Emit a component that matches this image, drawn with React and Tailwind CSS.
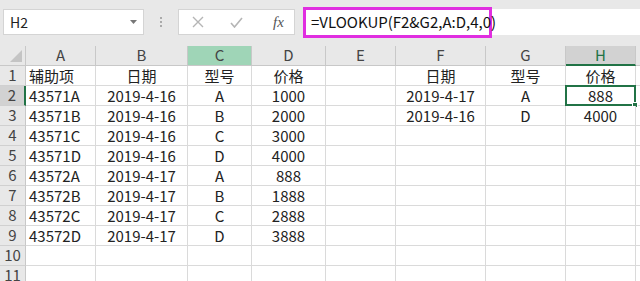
import React from "react";

const COLS = [
  { key: "A", w: "w-[70px]", align: "text-left pl-[3px]" },
  { key: "B", w: "w-[92px]", align: "text-center" },
  { key: "C", w: "w-[64px]", align: "text-center" },
  { key: "D", w: "w-[74px]", align: "text-center" },
  { key: "E", w: "w-[70px]", align: "text-center" },
  { key: "F", w: "w-[90px]", align: "text-center" },
  { key: "G", w: "w-[80px]", align: "text-center" },
  { key: "H", w: "w-[70px]", align: "text-center" },
];

const DATA = [
  ["辅助项", "日期", "型号", "价格", "", "日期", "型号", "价格"],
  ["43571A", "2019-4-16", "A", "1000", "", "2019-4-17", "A", "888"],
  ["43571B", "2019-4-16", "B", "2000", "", "2019-4-16", "D", "4000"],
  ["43571C", "2019-4-16", "C", "3000", "", "", "", ""],
  ["43571D", "2019-4-16", "D", "4000", "", "", "", ""],
  ["43572A", "2019-4-17", "A", "888", "", "", "", ""],
  ["43572B", "2019-4-17", "B", "1888", "", "", "", ""],
  ["43572C", "2019-4-17", "C", "2888", "", "", "", ""],
  ["43572D", "2019-4-17", "D", "3888", "", "", "", ""],
  ["", "", "", "", "", "", "", ""],
  ["", "", "", "", "", "", "", ""],
];

function FormulaBar() {
  return (
    <div className="flex h-[46px] items-start bg-[#e8e8e8] pt-[9px]">
      <div className="ml-[3px] flex h-[26px] w-[141px] items-center justify-between border border-[#d4d4d4] bg-white pl-[6px] pr-[6px]">
        <span className="text-[14px] text-[#222]">H2</span>
        <svg width="7" height="4" viewBox="0 0 7 4">
          <path d="M0 0 L7 0 L3.5 4 Z" fill="#777" />
        </svg>
      </div>
      <div className="flex w-[34px] flex-col items-center gap-[2px] pt-[8px]">
        <span className="h-[2px] w-[2px] bg-[#aaa]" />
        <span className="h-[2px] w-[2px] bg-[#aaa]" />
        <span className="h-[2px] w-[2px] bg-[#aaa]" />
      </div>
      <div className="flex h-[26px] w-[117px] items-center border border-[#d4d4d4] bg-white">
        <svg className="ml-[13px]" width="12" height="12" viewBox="0 0 12 12">
          <path d="M1 1 L11 11 M11 1 L1 11" stroke="#b5b5b5" strokeWidth="1.4" />
        </svg>
        <svg className="ml-[26px]" width="13" height="11" viewBox="0 0 13 11">
          <path d="M1 6 L4.5 10 L12 1" stroke="#b5b5b5" strokeWidth="1.6" fill="none" />
        </svg>
        <span className="ml-[30px] font-['Liberation_Serif',serif] text-[15px] italic text-[#555]">
          fx
        </span>
      </div>
      <div className="ml-[8px] flex h-[26px] flex-1 items-center bg-white">
        <div className="-mt-[0px] flex h-[31px] w-[189px] items-center border-[3px] border-[#e02ee0] pl-[5px] text-[15px] text-[#111]">
          =VLOOKUP(F2&amp;G2,A:D,4,0)
        </div>
      </div>
    </div>
  );
}

function HeaderRow() {
  return (
    <div className="flex h-[20px]">
      <div className="flex w-[26px] items-end justify-end border-b border-r border-[#c8c8c8] bg-[#e8e8e8] pb-[3px] pr-[3px]">
        <svg width="12" height="12" viewBox="0 0 12 12">
          <path d="M12 0 L12 12 L0 12 Z" fill="#c4c4c4" />
        </svg>
      </div>
      {COLS.map((c) => {
        const isC = c.key === "C";
        const isH = c.key === "H";
        return (
          <div
            key={c.key}
            className={`${c.w} flex items-center justify-center border-r text-[15px] text-[#444] ${
              isC
                ? "border-b border-[#c8c8c8] bg-[#9fd5b7]"
                : isH
                ? "border-b-2 border-r-[#c8c8c8] border-b-[#217346] bg-[#d2d2d2] text-[#217346]"
                : "border-b border-[#c8c8c8] bg-[#e8e8e8]"
            }`}
          >
            {c.key}
          </div>
        );
      })}
      <div className="flex-1 border-b border-[#c8c8c8] bg-[#e8e8e8]" />
    </div>
  );
}

function DataRow({ idx, row }) {
  const rowNum = idx + 1;
  const active = rowNum === 2;
  return (
    <div className="flex h-[20px]">
      <div
        className={`flex w-[26px] items-center justify-center border-b border-[#d0d0d0] text-[15px] text-[#444] ${
          active
            ? "border-r-2 border-r-[#217346] bg-[#d2d2d2]"
            : "border-r border-r-[#c8c8c8] bg-[#e8e8e8]"
        }`}
      >
        {rowNum}
      </div>
      {COLS.map((c, i) => {
        const sel = active && c.key === "H";
        return (
          <div
            key={c.key}
            className={`${c.w} relative flex items-center whitespace-nowrap border-b border-r border-[#dadada] bg-white text-[15px] leading-none text-[#222] ${
              c.align === "text-center" ? "justify-center" : "justify-start pl-[3px]"
            }`}
          >
            {row[i]}
            {sel && (
              <div className="absolute -left-[1px] -top-[1px] h-[21px] w-[71px] border-2 border-[#217346]">
                <div className="absolute -bottom-[4px] -right-[4px] h-[6px] w-[6px] border border-white bg-[#217346]" />
              </div>
            )}
          </div>
        );
      })}
      <div className="flex-1 border-b border-[#dadada] bg-white" />
    </div>
  );
}

export default function App() {
  return (
    <div className="h-[281px] w-[640px] overflow-hidden bg-white font-['Noto_Sans_CJK_SC','Noto_Sans',sans-serif]">
      <FormulaBar />
      <HeaderRow />
      {DATA.map((row, i) => (
        <DataRow key={i} idx={i} row={row} />
      ))}
    </div>
  );
}
